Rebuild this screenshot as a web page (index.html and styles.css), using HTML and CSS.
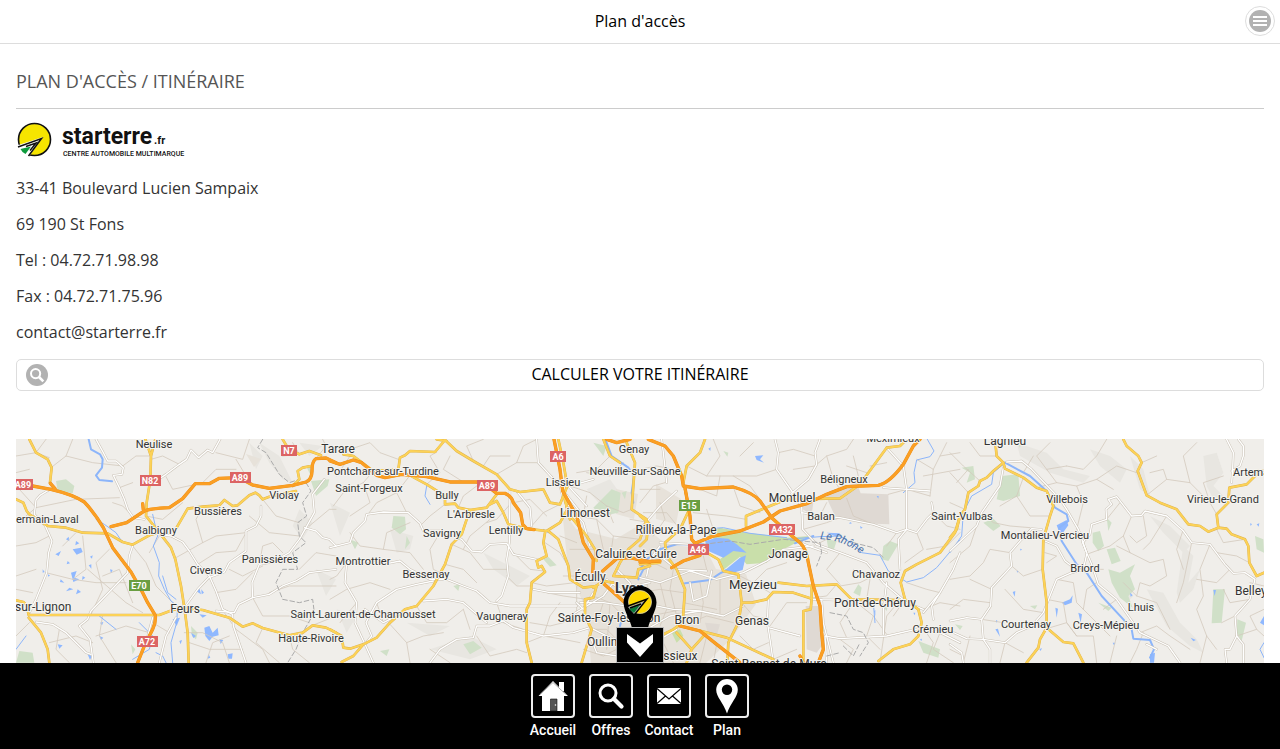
FILE: index.html
```html
<!DOCTYPE html>
<html lang="fr">

<head>
    <meta charset="UTF-8">
    <meta name="viewport" content="width=device-width, initial-scale=1.0">
    <title>Plan d'accès</title>
    <link rel="stylesheet" href="styles.css">
</head>

<body>
    <header class="header">
        <h1 class="header-title">Plan d'accès</h1>
        <button class="menu-btn" type="button" aria-label="Menu">
            <svg width="22" height="22" viewBox="0 0 22 22">
                <circle cx="11" cy="11" r="11" fill="#b2b2b2" />
                <path d="M4 7h14M4 11h14M4 15h14" stroke="#fff" stroke-width="2" />
            </svg>
        </button>
    </header>

    <main class="content">
        <h2 class="page-title">PLAN D'ACCÈS / ITINÉRAIRE</h2>

        <!-- logo -->
        <svg class="logo" width="176" height="40" viewBox="0 0 176 40">
            <circle cx="18.500" cy="20.500" r="16" fill="#f6e500" stroke="#111" stroke-width="1.600" />
            <path d="M1 26.500 27 18 12 39 4 34Z" fill="#fff" />
            <path d="M4.500 30 15 27.500 9.500 35Q6 33.500 4.500 30Z" fill="#0d9b3c" />
            <path d="M2 28 25.500 19.500 12.500 37M10 27.500 20 24 14 31.500" fill="none" stroke="#111" stroke-width="1.500" />
            <text class="logo-name" x="46" y="25">starterre</text>
            <text class="logo-ext" x="138" y="25">.fr</text>
            <text class="logo-tag" x="47" y="37">CENTRE AUTOMOBILE MULTIMARQUE</text>
        </svg>

        <p>33-41 Boulevard Lucien Sampaix</p>
        <p>69 190 St Fons</p>
        <p>Tel : 04.72.71.98.98</p>
        <p>Fax : 04.72.71.75.96</p>
        <p>contact@starterre.fr</p>

        <button class="route-btn" type="button">
            <svg class="route-icon" width="22" height="22" viewBox="0 0 22 22">
                <circle cx="11" cy="11" r="11" fill="#b2b2b2" />
                <circle cx="9.600" cy="9.600" r="4.600" fill="none" stroke="#fff" stroke-width="2" />
                <path d="M13 13l4.300 4.300" stroke="#fff" stroke-width="2.600" />
            </svg>
            CALCULER VOTRE ITINÉRAIRE
        </button>

        <div class="map">
            <svg class="map-svg" viewBox="0 0 1248 224" preserveAspectRatio="xMidYMin slice">
                <defs>
                    <!-- tile transforms: west, centre-west, centre-east, east -->
                    <g id="minor">
                        <g transform="translate(0 -3) scale(.33333)">
                            <path d="M0 60L60 50L100 65M60 50L90 10M105 95L150 60L230 80L320 90M10 160L60 215L180 190L310 185M60 215L30 240M140 330L180 290M320 90L360 60L400 60M350 140L310 155M390 240L440 250L500 200M200 300L210 400L170 430L90 410M170 430L240 440L330 440M225 535L260 460L240 380L280 340M215 400L330 500L380 530M0 330L60 320L100 300M0 420L60 400M0 460L50 470M350 330L390 380L420 450L480 510M430 300L400 350M480 365L560 320L600 300L690 290M545 385L600 350L660 345L690 290M600 470L660 460L710 410M560 320L540 250L560 215M560 140L600 100L660 100M450 122L470 160L540 145M490 85L440 60L405 70M600 50L680 70L700 10M660 70L690 120M740 190L780 240L850 260M700 240L760 290L850 300M640 400L680 420L740 390M800 350L770 320L740 330L730 385M625 530L660 580L740 640L760 680M640 680L620 620L560 590L505 590M710 485L740 540L820 540L880 560M760 470L820 450L960 450M850 400L900 350L960 360M880 270L940 220L960 220M740 576L720 620L790 680M0 600L40 560M130 580L120 640L160 680M240 600L330 570L400 590M260 537L250 600L300 680M410 560L460 590M100 620L180 600L230 620M570 680L590 620L640 600M800 60L850 55L830 20M900 68L930 30L920 10M150 60L170 10M0 110L40 100M290 200L320 210L355 245M350 500L310 400L260 420M520 620L580 640L680 640M820 598L830 640L880 680M890 568L960 540" />
                        </g>
                        <g transform="translate(314 -3) scale(.33333)">
                            <path d="M0 30L60 40L120 20L150 50L205 70M130 105L100 140L40 170L10 210M100 140L120 200L60 240M20 120L60 60M240 118L200 170L230 230M200 170L140 200L110 240M290 145L330 110L300 60L320 48M360 60L340 100L400 138M430 75L410 30L460 10M500 115L560 80L620 80M460 90L480 60L540 60M345 205L300 240L270 270M385 215L400 180L440 150M60 290L90 330L160 340L240 350L280 400M160 340L170 290L240 260M330 290L300 340L310 400L330 410M365 325L420 350L460 400L530 400M345 385L400 400L440 440M400 340L420 300L480 250M50 380L20 420L0 430M0 490L50 460L120 440L180 460M80 500L30 560M140 500L160 560L190 545M180 565L230 620L280 600L340 590M260 510L290 560L350 560L400 520M230 620L240 680M400 520L420 580M540 340L600 400L640 405M530 420L560 450L605 450M500 500L520 560L580 580M590 620L640 600L700 610L750 620M640 600L660 540L690 500M605 440L650 450L735 440M650 470L700 480L770 490M645 320L690 350L720 400M550 200L600 190L650 240M605 270L640 230L690 205M545 200L500 250L470 260M560 80L580 30L620 10M740 110L800 100L840 60M720 150L780 170L830 210L880 230L905 220M740 240L800 250L850 300L930 310M770 180L760 240M830 210L850 260M800 250L820 340M850 300L840 370M690 300L740 320M720 340L790 340M700 420L760 420M740 450L740 540L765 560M780 580L830 580L870 620M790 480L840 500L880 540M820 500L800 560M840 500L830 640M760 640L820 660L860 640M900 250L960 260M880 80L840 120L770 110M700 560L740 530M600 560L660 570L700 560M300 640L360 680M440 600L480 660L560 640L590 650" />
                        </g>
                        <g transform="translate(624 -3) scale(.33333)">
                            <path d="M140 90L200 120L280 120L330 150L360 190M200 120L240 60L220 10M240 120L230 180L180 160M280 153L300 210L360 230M300 60L340 20M410 100L350 120L280 120M415 50L460 40L525 60M460 100L525 90L560 60L620 40L640 10M560 60L580 130L600 160M640 60L660 140M680 110L620 90M745 175L800 160L870 180M740 80L690 90M830 70L880 100L870 180M850 120L960 100M900 60L960 50M880 100L920 20M620 187L640 240L700 265M490 280L560 260L600 245M540 240L560 200M0 200L40 150L75 140M0 100L50 90L100 100M0 160L60 160M10 230L80 230L120 280M60 200L75 250L40 300M160 230L260 240L318 250M200 220L220 280M0 400L40 380L80 400M40 380L30 340M20 440L40 520L20 560M60 440L80 520L60 570M0 470L60 460L130 470M100 400L90 460L110 540M30 540L130 520M130 500L180 510L230 520M180 440L190 500L180 560M200 400L190 360M240 430L240 540M150 560L200 540L280 560M300 420L340 440L380 400L440 380M340 440L390 470M305 500L340 540L385 550M390 570L440 500L500 500M385 620L340 640L300 600M400 670L470 640M600 350L560 400L600 445M640 400L690 430L680 490M600 450L660 440L700 420M590 445L560 480L520 485M640 500L600 560L620 605M650 500L700 540L740 595M780 492L740 540L720 680M700 540L680 600L720 640M600 610L640 640L620 680M795 490L760 540M830 290L850 340L795 380M860 340L920 330L960 290M880 230L920 270L960 280M850 520L900 500L960 510M845 570L880 620L860 680M900 590L880 640L940 680M800 440L860 460L900 470M530 325L580 300M770 290L740 330M200 600L180 680M70 620L100 680M30 640L80 650M230 625L220 680" />
                        </g>
                        <g transform="translate(934 -3) scale(.33333)">
                            <path d="M0 50L40 90L90 135M0 110L55 170M55 100L20 140M45 220L0 200M60 20L90 60L140 60M220 125L200 180L150 210M200 180L240 240L300 240M250 60L220 110M260 155L320 140L380 150L400 200L380 280M320 140L290 100L260 60L300 20M380 150L440 130L490 160M350 90L400 100L440 60L470 10M440 130L500 90L560 110M290 100L350 90M470 250L510 200M545 240L520 300L540 350L600 380L640 370L650 420L600 450L570 440L560 480M520 300L480 330L410 355M540 350L500 330M580 240L590 300L560 320L540 300M590 178L650 130L640 100L600 110M650 130L720 140L780 200L800 235M720 140L700 60L740 20M575 80L620 60M780 200L760 140L820 120M650 240L600 320L580 340M700 280L680 340L700 400M725 320L700 440L680 500M780 325L750 400L760 480L740 520L770 600L800 640M840 400L800 440L740 430M815 560L855 540M770 600L750 680M820 460L840 500L900 490M898 380L860 360L800 350M885 310L820 320L800 280M900 440L942 450M860 600L920 580L942 600M920 580L900 540L942 520M278 400L220 420L185 390M285 350L320 360L290 380M180 350L120 340L100 380L60 420L0 430M125 460L60 430M120 500L40 490L0 520M165 460L220 520L280 530M95 550L160 560M60 600L40 680M165 620L150 680M165 620L220 650M300 575L350 560L380 600L430 600L440 680M320 430L370 440L380 500L440 560L480 600M380 600L350 560L340 500L290 490M430 400L460 400M440 440L410 460L400 520M500 490L460 520M570 590L620 570L660 600L720 640M500 600L480 680M580 590L560 640L540 680M520 440L560 480L620 500L660 580M0 640L40 660M80 270L60 330L0 380M95 230L130 260L180 270L240 275" />
                        </g>
                    </g>
                    <g id="white">
                        <g transform="translate(0 -3) scale(.33333)">
                            <path d="M612 10L590 50L575 42L548 65L525 42L512 70L490 85L450 115L420 135" />
                            <path d="M240 10L262 50L275 75L300 75L322 95L318 115L292 118L310 155L325 190L335 220L352 245L385 250" />
                            <path d="M105 158L72 178L60 192L55 235L88 270L108 315L98 350L92 410L60 490L38 535" />
                            <path d="M350 330L340 360L335 410L225 525L215 550L190 570L222 610L232 680" />
                            <path d="M430 295L465 300L500 318L520 345L545 385L580 420L600 465L620 520L650 535L652 570L690 680" />
                            <path d="M600 525L655 530L668 505L710 485L708 440L730 385L770 378L820 350L850 310L870 275L895 230L890 175L925 130" />
                            <path d="M410 545L390 620M60 558L110 565L150 590L210 650L225 655M480 545L450 600L430 680" />
                            <path d="M865 275L900 285L920 305L940 310L960 330" />
                            <path d="M505 515L545 460L578 425L625 408L640 380L690 345L690 285L720 270L735 240L735 210" />
                            <path d="M710 485L760 475L800 450L840 435L880 410L960 400" />
                        </g>
                        <g transform="translate(314 -3) scale(.33333)">
                            <path d="M540 160L538 320L530 370L535 420L515 480L500 495M560 165L600 215L605 270" />
                            <path d="M0 335L60 320L70 290L105 255L110 235L160 228L235 230L270 262L280 285L330 285L395 310L425 345L455 348L480 325L530 322L550 355L620 370" />
                            <path d="M50 380L45 440L80 500L75 560L105 625L130 680M50 380L110 375L160 385L210 375L240 400L300 430L350 430L400 450L440 465L480 500L540 510L740 510" />
                            <path d="M105 625L125 600L108 560L140 500L200 460L260 445L310 435M105 520L160 560L190 545M280 495L350 490L400 500L440 535L470 560" />
                            <path d="M300 680L330 640L380 610L430 605L440 570L480 570L520 555L550 575L640 600L730 590L780 575L870 620" />
                            <path d="M620 10L625 80L690 150L700 190L760 260L780 330M700 165L760 240M715 150L770 210" />
                            <path d="M750 500L820 500L960 520M720 540L820 480L850 440M830 430L870 460L960 440M860 400L900 440L920 520M790 130L720 150M790 470L760 520L740 500" />
                            <path d="M610 460L660 470L750 470M780 600L800 650L860 660" />
                        </g>
                        <g transform="translate(624 -3) scale(.33333)">
                            <path d="M405 10L415 50L410 100L455 165L485 210L488 280L530 325L600 350L680 380L730 440L800 500L850 520" />
                            <path d="M540 10L525 50L530 85L505 130L455 172M485 230L540 240L600 245L700 265L770 290L800 280L830 290L860 250L880 230L875 200M730 155L870 165" />
                            <path d="M65 10L70 50L80 140M740 35L790 90L800 160L800 280L775 310L780 400M0 280L60 210L110 165" />
                            <path d="M0 425L60 440L150 405L230 430L310 410L380 375L430 340L520 330M0 500L100 520L180 525L250 540L310 510M150 440L160 495L200 480L215 405M60 360L110 400L200 405M20 580L90 540L180 525" />
                            <path d="M385 490L382 560L390 610L400 680M385 575L480 600M560 680L555 600L600 608L740 600L850 575L900 590L960 620M545 490L550 560L580 680M515 490L700 495" />
                            <path d="M880 550L875 510L900 470L940 400L960 350M900 470L850 530M740 440L730 520L730 595M0 600L60 610L110 580M20 640L90 660L160 660" />
                            <path d="M480 320L510 332L560 350M60 330L30 370L20 420M60 320L160 325" />
                        </g>
                        <g transform="translate(934 -3) scale(.33333)">
                            <path d="M170 78L215 75L245 100L330 190L350 220L385 280L410 350L425 385L445 445L500 490L570 590L655 630L690 680" />
                            <path d="M160 95L150 150L95 230L80 270L0 345" />
                            <path d="M410 350L398 320L420 295L425 265L470 250L468 220L485 205L475 190L500 182L545 240L575 238L585 225L650 240L700 285L725 320L780 325L825 385L850 412L885 410L915 430L900 490L855 540L860 600L880 625L880 680" />
                            <path d="M860 600L840 640L825 640L830 680M275 280L245 278L215 310L180 350L185 390L125 455L122 510L95 550L100 610L120 640L120 680" />
                            <path d="M0 555L50 545L95 550M0 585L50 608L100 610L165 620L200 590L245 570L280 530L320 430L360 412L400 400L410 355M285 315L320 330L345 375L365 390" />
                            <path d="M830 10L850 50L848 100L845 140M865 10L880 30L880 60L870 90L845 105M0 625L35 650L40 680M590 625L620 640" />
                        </g>
                    </g>
                    <g id="yellow">
                        <g transform="translate(0 -3) scale(.33333)">
                            <path d="M40 10L60 50L95 70L107 95L102 140L115 158" />
                            <path d="M0 190L22 200L32 225L40 235L95 270L150 275L200 290L275 292L320 318L350 326L400 298L425 290" />
                            <path d="M385 0L405 60L403 130L392 200L390 240L430 290L465 335L478 370L495 450L505 515L515 590L518 680M418 10L405 60" />
                            <path d="M0 493L22 498L32 508L38 537L430 537L470 522L500 517L560 522L640 545L680 572L710 562L740 576L820 598L860 590L890 568L930 575L960 590M38 545L75 590L95 640L100 680" />
                            <path d="M480 278L515 218L560 212L610 208L625 192L650 210L665 208L700 178L718 170L730 178L740 190L760 182L840 165M800 10L815 35L850 55L880 45L915 58M830 150L850 130L845 105L860 95L885 90" />
                        </g>
                        <g transform="translate(314 -3) scale(.33333)">
                            <path d="M40 55L70 60L110 90L130 105L205 100L210 65L225 58L240 45L315 48L345 12L380 45L430 75L500 115L540 160L570 168L640 160L660 200L690 205L712 150L700 80L685 10" />
                            <path d="M240 118L290 145L345 180L345 205L375 203L385 215L420 222L470 215L500 175M320 10L350 15" />
                            <path d="M100 625L140 605L180 560L225 520L260 510L310 450L345 385L365 325L395 295L410 250L420 222M0 580L35 600L40 635L60 638L100 625L70 660L35 678" />
                            <path d="M480 205L500 195L520 230L535 265L590 278L650 285L690 260L712 220L700 170M645 290L640 320L650 360L620 375L625 395L635 390L645 408L605 440L600 500L590 520L590 620L605 680" />
                            <path d="M655 285L685 310L715 390L720 430L760 455L800 450L790 485L765 490L765 540L785 580L755 680M712 220L725 245L770 300L795 340L800 375M700 170L720 250" />
                            <path d="M820 10L840 60L870 80M890 20L915 80L905 220L950 250L930 310L895 340L870 380L850 420L920 425L925 400L960 390M790 455L820 435L850 440" />
                        </g>
                        <g transform="translate(624 -3) scale(.33333)">
                            <path d="M195 10L180 50L140 90L130 140M135 160L148 220L120 280L75 320L80 360L110 400L135 460L128 560L100 580L60 600M0 240L25 260L20 310L0 330" />
                            <path d="M200 350L235 370L250 405L295 415L305 500L295 560L265 620L262 680M305 500L335 500L380 490L400 468L460 470L515 488M415 440L500 450L590 445L635 490L780 492" />
                            <path d="M515 450L515 490L512 520L490 525L490 680M318 270L318 240L390 210L440 190L600 187L660 145L740 35L780 30L800 10" />
                            <path d="M960 240L945 290L900 350L830 385L795 405L782 440L795 490L835 520L845 560L835 600L810 625L760 640L715 675M125 570L260 605L400 670M110 590L155 640L200 590M155 640L140 680M0 385L60 380" />
                        </g>
                        <g transform="translate(934 -3) scale(.33333)">
                            <path d="M135 10L140 60L160 80L130 105L110 125L90 135L85 150L55 170L45 220L30 240L20 280L0 305" />
                            <path d="M160 80L165 98L220 125L260 155L290 165L310 210L300 240L280 310L278 400L290 500L290 575L270 610L265 635L230 680M290 575L340 618L370 622L400 680" />
                            <path d="M520 10L530 30L565 60L575 80L563 105L590 178L630 200L680 220L715 265L750 270L775 287L805 275L830 278L845 295L885 310L895 330L898 380L920 420L942 410" />
                            <path d="M805 275L800 235L835 200L838 155L890 145L915 120L915 105L942 105" />
                        </g>
                    </g>
                    <g id="motorway">
                        <g transform="translate(0 -3) scale(.33333)">
                            <path d="M0 142L50 150L105 160Q170 175 205 198Q235 230 262 275L290 335L345 408L380 470L395 500L418 538Q420 560 410 580L385 630L365 680M103 142L117 158" />
                            <path d="M285 272L332 260L385 225Q400 218 460 215L500 188L538 143L580 143L610 127L670 125L710 147L760 157L830 148L870 138Q888 130 888 105Q888 75 900 68L930 66L960 80M380 203L382 222" />
                        </g>
                        <g transform="translate(314 -3) scale(.33333)">
                            <path d="M0 75L30 85L70 72L95 80L140 118L165 125L215 115L290 122L360 138L440 138L485 160L500 172L525 172Q545 180 550 200L572 230L578 265L590 278L612 281" />
                            <path d="M672 10L690 100L698 165L740 240L760 320L790 370L788 420M818 405L860 368L900 365L960 378M818 440L885 500M830 10L860 20L900 10" />
                        </g>
                        <g transform="translate(624 -3) scale(.33333)">
                            <path d="M25 10L75 30L100 60L125 120L130 150L180 158L280 153Q340 170 360 195L395 245L450 295L480 320Q500 340 505 380L520 450L540 510L545 590L550 640L535 680" />
                            <path d="M135 155L150 240L155 310L165 322L220 300L300 285L370 258L420 225L500 203L560 175L620 152L715 148Q750 140 790 85L820 30L840 10" />
                            <path d="M0 378L60 375M95 395L130 375L180 358M120 570L180 585L230 625L300 680M490 680L480 660" />
                        </g>
                    </g>
                </defs>

                <rect width="1248" height="224" fill="#f0eeea" />

                <!-- relief -->
                <g class="relief">
                    <g transform="translate(0 -3) scale(.33333)">
                        <path d="M730 20L790 60L830 140L800 130L760 80ZM850 20L920 30L880 60ZM850 220L890 260L860 310L830 270ZM700 20L740 60L720 100ZM900 400L960 430L930 480Z" />
                    </g>
                    <g transform="translate(314 -3) scale(.33333)">
                        <path d="M0 200L60 230L30 300ZM180 280L250 300L240 340L200 350ZM20 520L80 540L50 590ZM230 560L360 570L300 600ZM460 350L600 420L560 450L490 400ZM300 640L420 600L500 640L420 670ZM770 160L840 130L890 200L840 240Z" />
                    </g>
                    <g transform="translate(934 -3) scale(.33333)">
                        <path d="M200 20L290 50L340 100L420 120L400 140L300 110L210 60ZM420 40L480 60L530 100L510 140L450 90ZM540 60L580 100L600 180L570 160ZM760 60L800 50L820 110L790 150L840 200L790 190L770 150ZM600 240L660 270L720 330L700 350L640 290ZM700 330L730 360L715 440L750 400L730 460L690 500L680 470ZM590 460L640 470L690 560L740 610L760 650L720 630L650 570ZM520 430L550 480L530 500Z" />
                    </g>
                </g>

                <!-- built-up areas -->
                <path class="urban" d="M546 70L560 90L600 100L625 85L650 105L690 110L700 130L730 135L740 165L715 200L690 224L575 224L570 170L552 130ZM600 50L622 55L618 80L600 75ZM640 45L665 60L660 85L640 80ZM230 15L245 20L238 28Z" />
                <g transform="translate(624 -3) scale(.33333)" class="zone">
                    <path d="M555 175L570 165L650 140L662 172L745 175L748 265L665 262L585 240ZM497 510L535 510L545 630L530 650L500 640ZM195 560L240 565L230 600L205 595ZM470 210L520 200L515 235Z" />
                </g>

                <!-- forests and parks -->
                <g class="forest">
                    <g transform="translate(0 -3) scale(.33333)">
                        <path d="M120 135L150 130L175 150L170 172L125 165ZM10 645L50 650L55 680L0 680ZM345 625L358 640L350 655ZM525 570L545 590L540 610L528 600ZM885 135L940 130L935 150L900 180ZM870 90L890 85L885 120Z" />
                    </g>
                    <g transform="translate(314 -3) scale(.33333)">
                        <path d="M190 240L225 242L228 280L210 295L185 275ZM60 310L85 320L75 340ZM640 370L655 362L680 388L660 392ZM790 215L845 160L872 170L865 230L815 240ZM400 625L430 615L455 635L420 655ZM150 645L178 640L170 660ZM370 450L390 445L385 465ZM230 300L240 320L225 340ZM790 20L830 30L820 60ZM875 170L890 165L885 190Z" />
                    </g>
                    <g transform="translate(624 -3) scale(.33333)">
                        <path class="park" d="M195 290L240 275L320 290L440 305L510 300L460 325L400 355L380 380L320 385L300 362L250 402L240 370L270 345ZM95 590L120 580L130 600L110 620Z" />
                        <path d="M730 330L750 315L775 325L745 375L725 370ZM835 615L900 640L895 665L850 650ZM640 470L655 445L665 455L660 480ZM560 310L590 315L580 345L565 340ZM720 500L745 505L740 525ZM250 45L265 50L262 62ZM540 565L560 580L545 590Z" />
                    </g>
                    <g transform="translate(934 -3) scale(.33333)">
                        <path d="M155 120L205 115L210 180L160 195L140 190ZM100 260L130 248L152 270L130 285ZM35 95L70 90L75 130L50 140L60 110ZM428 290L450 285L462 330L445 345L428 320ZM470 340L495 335L512 375L485 385ZM475 400L510 410L555 385L540 420L555 460L535 480L548 515L510 485L485 440ZM790 460L825 460L815 560L785 562ZM862 550L888 560L875 615L860 590ZM470 245L485 260L475 285ZM445 500L485 515L475 525ZM240 510L262 508L255 520ZM915 300L940 310L942 350L920 340ZM15 565L38 570L30 582ZM200 20L215 15L210 35Z" />
                    </g>
                </g>

                <!-- lakes and ponds -->
                <g class="lake">
                    <g transform="translate(0 -3) scale(.33333)">
                        <path d="M118 355L135 345L128 360ZM150 310L158 302L160 316ZM170 340L195 335L200 348L182 356ZM180 315L190 322L178 328ZM222 362L230 358L228 368ZM165 410L182 405L175 425L190 430L172 438ZM200 420L208 425L198 432ZM134 430L145 440L132 438ZM160 455L172 460L150 466ZM185 460L195 468L180 475ZM218 388L226 385L226 398ZM95 415L102 418L97 422ZM282 400L290 402L285 412ZM252 560L262 558L258 568ZM250 600L262 605L255 612ZM125 625L140 628L130 638ZM215 655L228 660L222 672ZM540 465L550 455L555 475ZM556 460L564 470L557 475ZM565 575L580 570L590 590L605 575L608 598L590 602L580 615L568 600ZM525 590L540 600L532 606ZM550 535L572 538L560 545ZM610 610L622 612L614 624ZM635 655L650 652L648 668L637 668ZM578 655L583 665L575 668ZM470 550L492 545L482 570ZM155 375L162 382L152 385ZM80 400L86 408L80 410ZM490 615L498 612L494 625Z" />
                    </g>
                    <g transform="translate(624 -3) scale(.33333)">
                        <path d="M195 315L230 305L265 308L290 325L320 350L280 345L250 365L205 345ZM252 405L300 365L318 358L308 402L280 410ZM345 60L370 58L360 70L372 80L350 72ZM205 38L212 34L211 45ZM710 180L716 180L715 188ZM560 290L600 292L590 302ZM820 530L826 530L824 538ZM840 610L846 608L844 616ZM630 258L636 262L628 264ZM660 270L668 275L662 278ZM702 525L706 522L706 540Z" />
                    </g>
                    <g transform="translate(934 -3) scale(.33333)">
                        <path d="M320 268L350 252L355 268L332 300ZM188 468L196 465L194 482ZM316 515L324 518L320 545ZM335 500L360 490L368 478L365 500L345 508ZM385 530L396 535L392 560ZM136 580L144 578L150 602ZM138 552L143 555L138 560ZM488 620L496 620L492 628ZM790 462L798 462L794 480ZM920 265L928 262L926 272ZM900 262L906 264L902 270ZM722 605L738 612L730 616ZM930 560L942 540L942 568ZM210 338L216 340L212 344ZM268 640L276 636L272 645ZM200 404L206 405L202 410ZM600 655L615 650L612 680L600 680ZM540 470L548 478L542 482Z" />
                    </g>
                </g>

                <use href="#minor" class="minor" />

                <!-- rivers -->
                <g class="river">
                    <g transform="translate(0 -3) scale(.33333)">
                        <path d="M218 10L225 40L252 55L260 70L258 95L240 118L250 132L288 136" />
                        <path class="stream" d="M410 235L425 300L412 330L430 380L428 420L445 460L465 495L485 510L482 560L465 620L470 680M240 250L265 265L300 290L320 320M250 540L300 580M370 560L410 600L400 640L350 670M0 640L30 600M440 420L455 470L480 490M420 650L440 660L450 680" />
                    </g>
                    <g transform="translate(314 -3) scale(.33333)">
                        <path class="stream" d="M290 150L285 180L300 205M640 280L655 290" />
                        <path d="M828 15L845 60L895 95L912 120L905 170L910 200" />
                        <path d="M925 430L940 400L960 390M870 570L875 550" />
                    </g>
                    <g transform="translate(624 -3) scale(.33333)">
                        <path d="M0 400L20 370L60 340L110 325L190 325M135 442L210 432L240 412L260 402M465 322L520 300" />
                        <path class="stream" d="M440 310L540 302L600 300L640 325L665 350L720 358L745 405L800 438L850 425L890 395L960 312M862 10L882 45L870 62L830 72L822 110L825 140L790 170M180 280L250 275L330 292L440 305M700 500L705 560" />
                    </g>
                    <g transform="translate(934 -3) scale(.33333)">
                        <path d="M165 80L240 120L290 165L315 215L350 235L355 255L328 275L335 315L380 385L410 410L455 480L520 550L545 580L550 608L600 612L612 640L600 665" />
                        <path class="stream" d="M0 350L35 300L40 230L65 180L125 145L130 110L160 85M942 620L930 640L942 665" />
                    </g>
                </g>

                <use href="#white" class="white-case" />
                <use href="#white" class="white-road" />

                <!-- department borders -->
                <g class="border">
                    <g transform="translate(0 -3) scale(.33333)">
                        <path d="M740 10L725 35L750 50L790 115L820 140L850 130M870 140L885 165L860 200L872 240L845 260L850 300L870 320L830 350L845 400L800 400L780 440L800 490L850 500L890 490L895 530L860 590L840 640L815 680" />
                    </g>
                    <g transform="translate(624 -3) scale(.33333)">
                        <path d="M190 325L270 315L330 325L430 310L540 320L545 350L530 390M640 320L700 335L730 365M570 530L620 540L640 580L670 590L685 620L660 660M610 630L640 660L660 620M560 660L600 650" />
                    </g>
                </g>

                <use href="#yellow" class="yellow-case" />
                <use href="#yellow" class="yellow-road" />
                <use href="#motorway" class="motorway-case" />
                <use href="#motorway" class="motorway-road" />

                <!-- place names -->
                <g class="places">
                    <text x="138" y="9">Neulise</text>
                    <text x="268" y="60">Violay</text>
                    <text x="202" y="76">Bussières</text>
                    <text x="140" y="95">Balbigny</text>
                    <text x="0" y="84" class="start">ermain-Laval</text>
                    <text x="254" y="124">Panissières</text>
                    <text x="190" y="135">Civens</text>
                    <text x="367" y="36">Pontcharra-sur-Turdine</text>
                    <text x="353" y="53">Saint-Forgeux</text>
                    <text x="431" y="60">Bully</text>
                    <text x="455" y="79">L'Arbresle</text>
                    <text x="426" y="98">Savigny</text>
                    <text x="490" y="95">Lentilly</text>
                    <text x="347" y="126">Montrottier</text>
                    <text x="410" y="139">Bessenay</text>
                    <text x="347" y="179">Saint-Laurent-de-Chamousset</text>
                    <text x="295" y="203">Haute-Rivoire</text>
                    <text x="486" y="181">Vaugneray</text>
                    <text x="547" y="47">Lissieu</text>
                    <text x="618" y="14">Genay</text>
                    <text x="619" y="36">Neuville-sur-Saône</text>
                    <text x="828" y="44">Béligneux</text>
                    <text x="805" y="81">Balan</text>
                    <text x="877" y="3">Meximieux</text>
                    <text x="946" y="81">Saint-Vulbas</text>
                    <text x="860" y="139">Chavanoz</text>
                    <text x="917" y="194">Crémieu</text>
                    <text x="1051" y="64">Villebois</text>
                    <text x="1029" y="100">Montalieu-Vercieu</text>
                    <text x="1069" y="133">Briord</text>
                    <text x="1125" y="172">Lhuis</text>
                    <text x="1010" y="189">Courtenay</text>
                    <text x="1090" y="190">Creys-Mépieu</text>
                    <text x="1217" y="37" class="start">Artemare</text>
                    <text x="1171" y="64" class="start">Virieu-le-Grand</text>
                </g>
                <g class="towns">
                    <text x="-1" y="172" class="start">sur-Lignon</text>
                    <text x="169" y="174">Feurs</text>
                    <text x="322" y="14">Tarare</text>
                    <text x="569" y="78">Limonest</text>
                    <text x="660" y="95">Rillieux-la-Pape</text>
                    <text x="620" y="119">Caluire-et-Cuire</text>
                    <text x="574" y="142">Écully</text>
                    <text x="593" y="183">Sainte-Foy-lès-Lyon</text>
                    <text x="571" y="207" class="start">Oullins</text>
                    <text x="671" y="185">Bron</text>
                    <text x="736" y="186">Genas</text>
                    <text x="624" y="221" class="start">Vénissieux</text>
                    <text x="776" y="63">Montluel</text>
                    <text x="772" y="119">Jonage</text>
                    <text x="859" y="168">Pont-de-Chéruy</text>
                    <text x="753" y="229">Saint-Bonnet-de-Mure</text>
                    <text x="989" y="6">Lagnieu</text>
                    <text x="1219" y="156" class="start">Belley</text>
                    <text x="737" y="150" class="big">Meyzieu</text>
                    <text x="599" y="154" class="start city">Lyon</text>
                </g>
                <path id="rhone" d="M804 100Q830 102 846 116" fill="none" />
                <text class="river-name"><textPath href="#rhone">Le Rhône</textPath></text>

                <!-- road numbers -->
                <g class="shields">
                    <rect x="0" y="40" width="17" height="11" /><text x="7" y="49">A89</text>
                    <rect x="124" y="36" width="21" height="11" /><text x="134" y="45">N82</text>
                    <rect x="214" y="33" width="21" height="11" /><text x="224" y="42">A89</text>
                    <rect x="265" y="6" width="16" height="11" /><text x="273" y="15">N7</text>
                    <rect x="121" y="197" width="21" height="11" /><text x="131" y="206">A72</text>
                    <rect x="461" y="41" width="21" height="11" /><text x="471" y="50">A89</text>
                    <rect x="534" y="12" width="16" height="11" /><text x="542" y="21">A6</text>
                    <rect x="753" y="85" width="26" height="11" /><text x="766" y="94">A432</text>
                    <rect x="672" y="105" width="21" height="11" /><text x="682" y="114">A46</text>
                    <rect class="euro" x="113" y="141" width="21" height="11" /><text x="123" y="150">E70</text>
                    <rect class="euro" x="663" y="61" width="21" height="11" /><text x="673" y="70">E15</text>
                </g>

                <!-- dealership pin -->
                <path d="M624 147a16.500 16.500 0 0 1 16.500 16.500C640 173 634 180 632 189h-16C614 180 608 173 607.500 163.500A16.500 16.500 0 0 1 624 147Z" fill="#000" />
                <circle cx="624" cy="163" r="11.500" fill="#ffd900" stroke="#d8d0b0" stroke-width=".8" />
                <path d="M612 168L631 161L618 175Z" fill="#aaa" />
                <path d="M613 170L624 166L618 174Z" fill="#0b7a3a" />
                <path d="M612 167L631 160L619 175M614 169L625 165" fill="none" stroke="#000" stroke-width="1.400" />
            </svg>

            <button class="nav-toggle" type="button" aria-label="Masquer le menu">
                <svg width="26" height="23" viewBox="0 0 26 23">
                    <path d="M0 0L13 9.500L26 0V8.500L13 23L0 8.500Z" fill="#fff" />
                </svg>
            </button>
        </div>
    </main>

    <nav class="bottom-nav">
        <a class="nav-item" href="#accueil">
            <svg width="44" height="44" viewBox="0 0 44 44">
                <rect class="nav-frame" x="1" y="1" width="42" height="42" rx="3" />
                <path d="M28 8h5v9h-5z" fill="#fff" />
                <path d="M22 7L37 22H33V37H11V22H7.500Z" fill="#fff" />
                <path d="M9 20.500L22 8.500L35 20.500" fill="none" stroke="#999" stroke-width=".8" />
                <path d="M19.500 25h6.500v12h-6.500z" fill="#555" stroke="#111" stroke-width=".6" />
                <circle cx="24.500" cy="31" r=".8" fill="#fff" />
            </svg>
            <span>Accueil</span>
        </a>
        <a class="nav-item" href="#offres">
            <svg width="44" height="44" viewBox="0 0 44 44">
                <rect class="nav-frame" x="1" y="1" width="42" height="42" rx="3" />
                <circle cx="19" cy="19" r="8" fill="none" stroke="#fff" stroke-width="3" />
                <path d="M25 25l7.500 7.500" stroke="#fff" stroke-width="4.200" stroke-linecap="round" />
            </svg>
            <span>Offres</span>
        </a>
        <a class="nav-item" href="#contact">
            <svg width="44" height="44" viewBox="0 0 44 44">
                <rect class="nav-frame" x="1" y="1" width="42" height="42" rx="3" />
                <path d="M10 14h24v16h-24z" fill="#fff" />
                <path d="M10 14.500L22 25L34 14.500M10 29.500L18.500 22M34 29.500L25.500 22" fill="none" stroke="#000" stroke-width="1.200" />
            </svg>
            <span>Contact</span>
        </a>
        <a class="nav-item" href="#plan">
            <svg width="44" height="44" viewBox="0 0 44 44">
                <rect class="nav-frame" x="1" y="1" width="42" height="42" rx="3" />
                <path d="M22 5a10.800 10.800 0 0 1 10.800 10.800C32.800 23 25.500 29 22 39.500C18.500 29 11.200 23 11.200 15.800A10.800 10.800 0 0 1 22 5Z" fill="#fff" />
                <circle cx="22" cy="15.800" r="5.200" fill="#000" />
            </svg>
            <span>Plan</span>
        </a>
    </nav>
</body>

</html>
```
FILE: styles.css
```css
* {
    box-sizing: border-box;
}

body {
    margin: 0;
    min-height: 100vh;
    display: flex;
    flex-direction: column;
    background-color: #fff;
    color: #333;
    font-family: "Open Sans", sans-serif;
    font-size: 16px;
    line-height: 20px;
}

button {
    font: inherit;
    cursor: pointer;
}

.header {
    display: grid;
    grid-template-columns: 30px 1fr 30px;
    align-items: center;
    height: 44px;
    padding: 0 5px 2px;
    border-bottom: 1px solid #ddd;
}

.header-title {
    grid-column: 2;
    margin: 0;
    color: #000;
    font-size: 16px;
    font-weight: 400;
    text-align: center;
}

.menu-btn {
    display: flex;
    align-items: center;
    justify-content: center;
    width: 30px;
    height: 30px;
    padding: 0;
    border: 1px solid #ddd;
    border-radius: 50%;
    background-color: #fff;
}

.content {
    flex: 1;
    display: flex;
    flex-direction: column;
    padding: 0 16px;
}

.page-title {
    margin: 16px 0 10px;
    padding: 9px 0 15px;
    border-bottom: 1px solid #ccc;
    color: #555;
    font-size: 18px;
    font-weight: 400;
    line-height: 24px;
}

.logo {
    display: block;
    margin-bottom: 19px;
}

.logo text {
    fill: #111;
    font-family: Roboto, sans-serif;
    font-weight: 700;
}

.logo .logo-name {
    font-size: 23px;
}

.logo .logo-ext {
    font-size: 11px;
}

.logo .logo-tag {
    font-size: 7px;
    font-weight: 500;
}

.content p {
    margin: 0 0 16px;
}

.route-btn {
    position: relative;
    height: 32px;
    margin-top: 1px;
    padding: 0 40px 2px;
    border: 1px solid #ddd;
    border-radius: 5px;
    background-color: #fff;
    color: #000;
    text-align: center;
}

.route-icon {
    position: absolute;
    left: 9px;
    top: 4px;
}

/* map */
.map {
    position: relative;
    flex: 1;
    min-height: 200px;
    margin-top: 48px;
    overflow: hidden;
}

.map-svg {
    position: absolute;
    width: 100%;
    height: 100%;
    font-family: Roboto, sans-serif;
}

.minor,
.white-case,
.white-road,
.yellow-case,
.yellow-road,
.motorway-case,
.motorway-road,
.river,
.border {
    fill: none;
    stroke-linejoin: round;
    stroke-linecap: round;
}

.minor {
    stroke: #d3c9bc;
    stroke-width: 2.4;
}

.white-case {
    stroke: #c8c0b4;
    stroke-width: 7;
}

.white-road {
    stroke: #fff;
    stroke-width: 4;
}

.yellow-case {
    stroke: #dcb04c;
    stroke-width: 8;
}

.yellow-road {
    stroke: #fcd257;
    stroke-width: 6;
}

.motorway-case {
    stroke: #ea8c14;
    stroke-width: 10;
}

.motorway-road {
    stroke: #fb9f24;
    stroke-width: 8;
}

.river {
    stroke: #8cb5fa;
    stroke-width: 6;
}

.stream {
    stroke-width: 3;
}

.lake {
    fill: #8fb8ff;
}

.border {
    stroke: #aaa;
    stroke-width: 3;
    stroke-dasharray: 14 8;
}

.relief {
    fill: #e8e6e1;
}

.urban {
    fill: #e7e2da;
}

.zone {
    fill: #dfd9d3;
}

.forest {
    fill: #d0e0c8;
}

.park {
    fill: #c9dfaa;
}

.places text,
.towns text {
    fill: #333;
    stroke: #f5f4f0;
    stroke-width: 2px;
    stroke-linejoin: round;
    paint-order: stroke;
    text-anchor: middle;
}

.places text {
    font-size: 11px;
}

.towns text {
    font-size: 12px;
}

.map-svg .start {
    text-anchor: start;
}

.towns .big {
    font-size: 13px;
}

.towns .city {
    font-size: 14px;
    font-weight: 700;
}

.river-name {
    fill: #4a6fa5;
    font-size: 11px;
    font-style: italic;
}

.shields rect {
    fill: #dc6464;
}

.shields .euro {
    fill: #6a9e42;
}

.shields text {
    fill: #fff;
    font-size: 9px;
    font-weight: 700;
    text-anchor: middle;
}

.nav-toggle {
    position: absolute;
    left: 50%;
    bottom: 0;
    display: flex;
    align-items: center;
    justify-content: center;
    width: 48px;
    height: 36px;
    margin-left: -24px;
    padding: 0;
    border: 1px solid #bbb;
    background-color: #000;
}

/* bottom bar */
.bottom-nav {
    display: flex;
    justify-content: center;
    height: 86px;
    padding-top: 11px;
    background-color: #000;
}

.nav-item {
    display: flex;
    flex-direction: column;
    align-items: center;
    gap: 2px;
    width: 58px;
    color: #fff;
    font-family: Roboto, sans-serif;
    font-size: 14px;
    font-weight: 500;
    text-decoration: none;
}

.nav-frame {
    fill: #000;
    stroke: #eee;
    stroke-width: 2;
}
```
